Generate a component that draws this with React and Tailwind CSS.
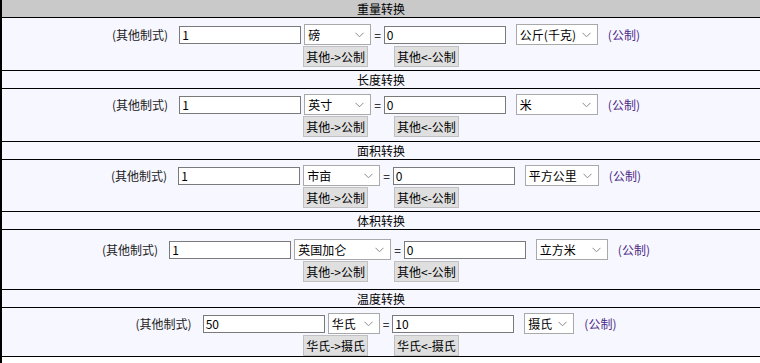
import React from "react";

const sections = [
  { title: "重量转换", gray: true, label: "(其他制式)", v1: "1", s1: "磅", s1w: 67, v2: "0", s2: "公斤(千克)", s2w: 82, b1: "其他->公制", b2: "其他<-公制", h: 52, pt: 6 },
  { title: "长度转换", label: "(其他制式)", v1: "1", s1: "英寸", s1w: 67, v2: "0", s2: "米", s2w: 82, b1: "其他->公制", b2: "其他<-公制", h: 52, pt: 5 },
  { title: "面积转换", label: "(其他制式)", v1: "1", s1: "市亩", s1w: 77, v2: "0", s2: "平方公里", s2w: 74, b1: "其他->公制", b2: "其他<-公制", h: 51, pt: 5 },
  { title: "体积转换", label: "(其他制式)", v1: "1", s1: "英国加仑", s1w: 97, v2: "0", s2: "立方米", s2w: 72, b1: "其他->公制", b2: "其他<-公制", h: 59, pt: 9 },
  { title: "温度转换", label: "(其他制式)", v1: "50", s1: "华氏", s1w: 52, v2: "10", s2: "摄氏", s2w: 50, b1: "华氏->摄氏", b2: "华氏<-摄氏", h: 48, pt: 5 },
];

function Chevron() {
  return (
    <svg width="9" height="6" viewBox="0 0 9 6" className="shrink-0">
      <path d="M0.5 0.8 L4.5 4.8 L8.5 0.8" fill="none" stroke="#8a8a8a" strokeWidth="1" />
    </svg>
  );
}

function Select({ text, w }) {
  return (
    <div
      className="flex h-[21px] items-center justify-between border border-[#a9a9a9] bg-white pl-[3px] pr-[6px] text-[12px] leading-[16px] text-black"
      style={{ width: w }}
    >
      <span className="whitespace-nowrap">{text}</span>
      <Chevron />
    </div>
  );
}

function Input({ v }) {
  return (
    <div className="flex h-[18px] w-[122px] items-center border border-[#7a7a7a] bg-white pl-[2px] text-[12px] leading-[16px] text-black">
      {v}
    </div>
  );
}

function Btn({ t }) {
  return (
    <div className="flex h-[21px] items-center border border-[#c0c0c0] bg-[#dfdfdf] px-[2px] text-[12px] leading-[16px] text-black whitespace-nowrap">
      {t}
    </div>
  );
}

export default function App() {
  return (
    <div
      className="w-[760px] h-[363px] overflow-hidden bg-white border-l-2 border-black font-normal"
      style={{ fontFamily: '"Noto Sans CJK SC", "Noto Sans", sans-serif' }}
    >
      {sections.map((s, i) => (
        <div key={i} className="border-b border-black">
          <div
            className={
              "flex h-[18px] items-center justify-center border-b border-black text-[12px] leading-[16px] text-black " +
              (s.gray ? "bg-[#c9c9c9]" : "bg-[#f7f7ff]")
            }
          >
            {s.title}
          </div>
          <div
            className="flex flex-col items-center bg-[#f7f7ff]"
            style={{ height: s.h, paddingTop: s.pt }}
          >
            <div className="flex items-center pr-[10px]">
              <span className="mr-[11px] text-[12px] leading-[16px] text-[#222] whitespace-nowrap">{s.label}</span>
              <Input v={s.v1} />
              <div className="ml-[3px]">
                <Select text={s.s1} w={s.s1w} />
              </div>
              <span className="mx-[3px] text-[12px] leading-[16px] text-black">=</span>
              <Input v={s.v2} />
              <div className="ml-[10px]">
                <Select text={s.s2} w={s.s2w} />
              </div>
              <span className="ml-[10px] text-[12px] leading-[16px] text-[#4b2a85] whitespace-nowrap">(公制)</span>
            </div>
            <div className="mt-[1px] flex gap-[26px]">
              <Btn t={s.b1} />
              <Btn t={s.b2} />
            </div>
          </div>
        </div>
      ))}
    </div>
  );
}
